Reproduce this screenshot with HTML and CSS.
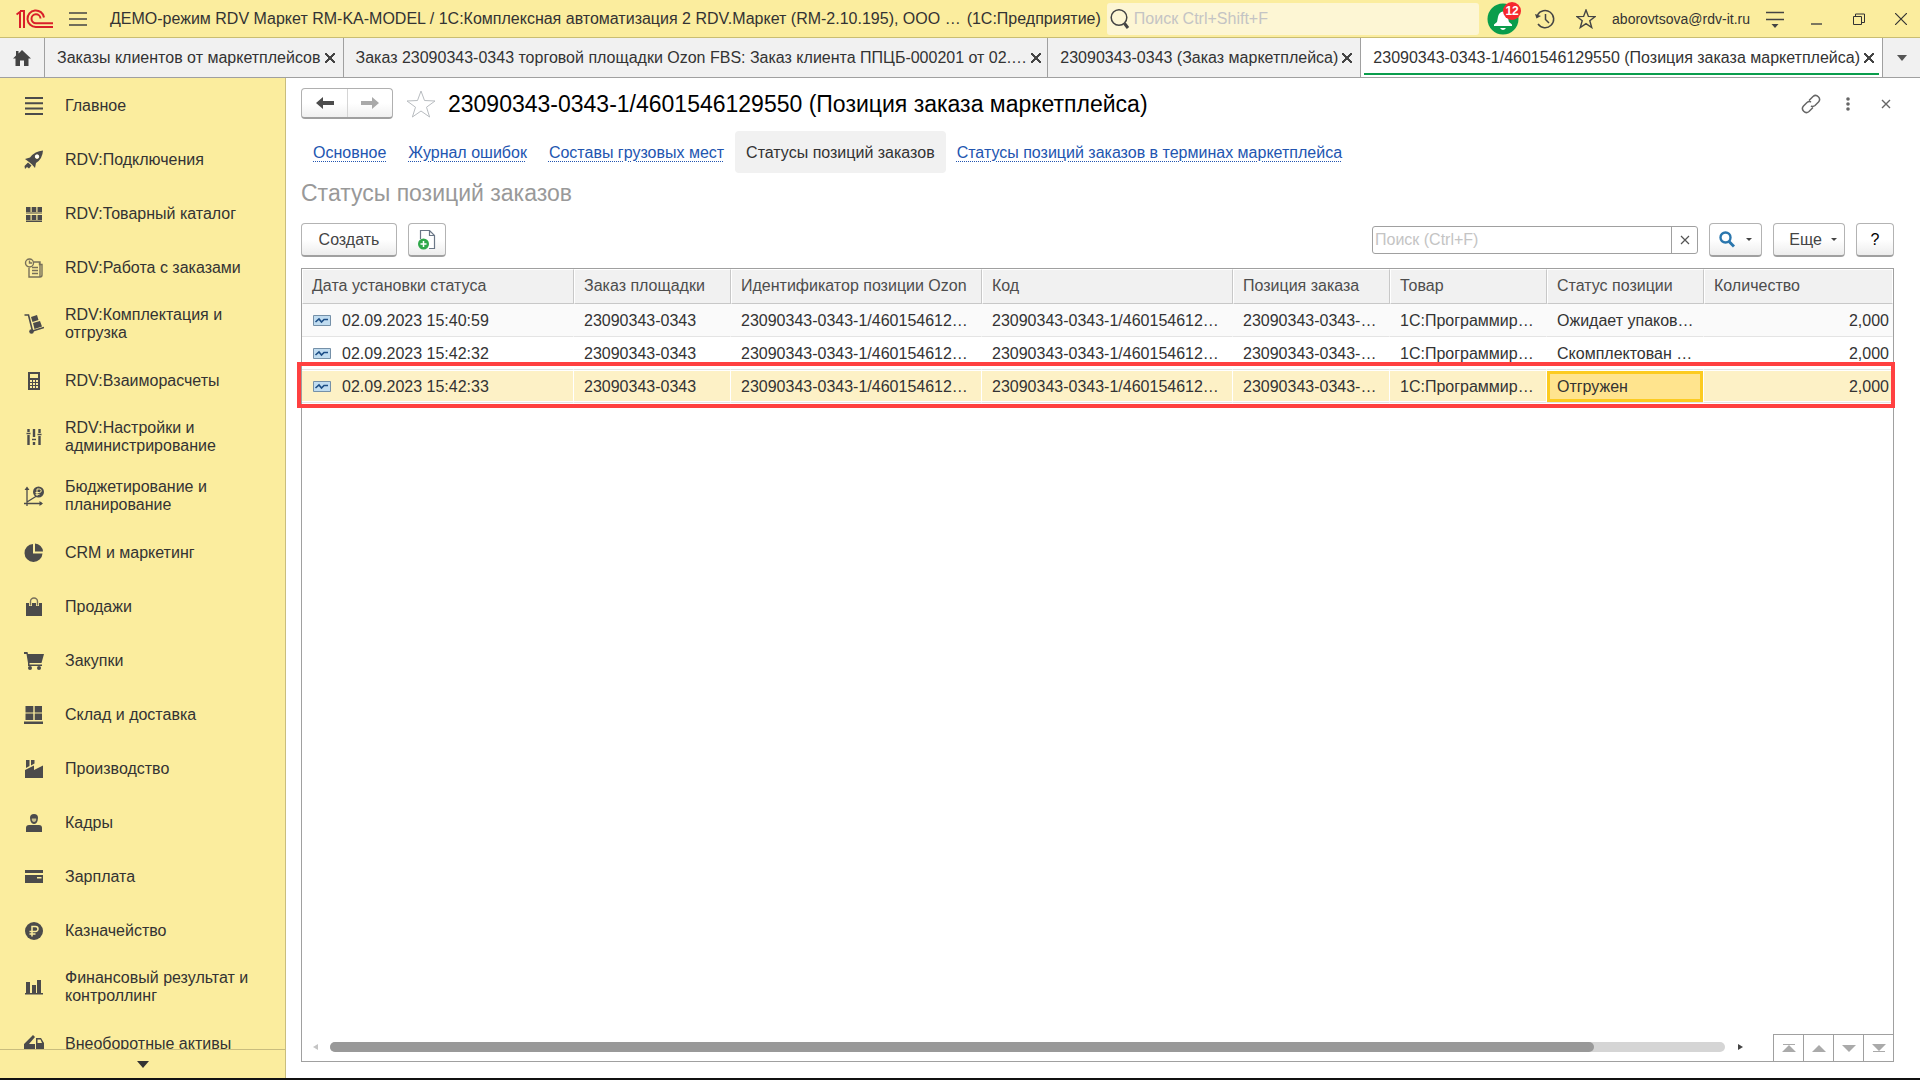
FILE: index.html
```html
<!DOCTYPE html>
<html lang="ru">
<head>
    <meta charset="UTF-8">
    <meta name="viewport" content="width=device-width, initial-scale=1.0">
    <title>Статусы позиций заказов</title>
    <link rel="stylesheet" href="styles.css">
</head>
<body>
    <header class="titlebar">
        <svg class="logo" width="38" height="20" viewBox="0 0 38 20" fill="none" stroke="#d9202a" stroke-width="2">
            <path d="M0.500 5.500L4 3V19M4 2H8V19"/>
            <path d="M28 8.500A8.300 8.300 0 1 0 20 18H37"/>
            <path d="M24.500 9.500A4.500 4.500 0 1 0 20 14.300H37"/>
        </svg>
        <button class="icon-btn menu-btn" aria-label="Меню">
            <svg width="18" height="14" viewBox="0 0 18 14" stroke="#444" stroke-width="1.400"><path d="M0 1H18M0 7H18M0 13H18"/></svg>
        </button>
        <span class="app-title">ДЕМО-режим RDV Маркет RM-KA-MODEL / 1С:Комплексная автоматизация 2 RDV.Маркет (RM-2.10.195), ООО …</span>
        <span class="app-name">(1С:Предприятие)</span>
        <label class="global-search">
            <svg width="20" height="22" viewBox="0 0 20 22" fill="none" stroke="#444"><circle cx="9" cy="9.500" r="7.800" stroke-width="1.500"/><path d="M14.500 15.500L18 20" stroke-width="3"/></svg>
            <input type="text" placeholder="Поиск Ctrl+Shift+F" aria-label="Поиск">
        </label>
        <div class="title-tools">
            <button class="icon-btn bell" aria-label="Уведомления">
                <svg width="32" height="32" viewBox="0 0 32 32"><circle cx="16" cy="16" r="15.500" fill="#0a9d4c"/><path d="M7 23V21.500L10 19C11 16 10.500 9 16 8.500C21.500 9 21 16 22 19L25 21.500V23ZM13 25H19Q16 29 13 25Z" fill="#fff"/></svg>
                <span class="badge">12</span>
            </button>
            <button class="icon-btn" aria-label="История">
                <svg width="20" height="20" viewBox="0 0 20 20" fill="none" stroke="#444" stroke-width="1.500"><path d="M2.500 6A8.600 8.600 0 1 1 3 15M10.500 5V10.500L14 14"/><path d="M0 5L6 7L1.500 9.500Z" fill="#444" stroke="none"/></svg>
            </button>
            <button class="icon-btn favorites" aria-label="Избранное">
                <svg width="20" height="20" viewBox="0 0 20 20" fill="none" stroke="#444" stroke-width="1.400"><path d="M10 1L12.400 7.400L19.200 7.600L13.800 11.800L15.700 18.500L10 14.600L4.300 18.500L6.200 11.800L0.800 7.600L7.600 7.400Z"/></svg>
            </button>
            <a class="user" href="#">aborovtsova@rdv-it.ru</a>
            <button class="icon-btn" aria-label="Сервис">
                <svg width="18" height="18" viewBox="0 0 18 18"><path d="M0 2.500H18M0 9.500H18" stroke="#444" stroke-width="1.500"/><path d="M5.500 14H12.500L9 18Z" fill="#444"/></svg>
            </button>
            <div class="window-btns">
                <button class="icon-btn" aria-label="Свернуть">
                    <svg width="12" height="12" viewBox="0 0 12 12"><path d="M0 11H11" stroke="#444" stroke-width="1.400"/></svg>
                </button>
                <button class="icon-btn" aria-label="Развернуть">
                    <svg width="12" height="12" viewBox="0 0 12 12" fill="none" stroke="#333"><path d="M0.500 3.500H8.500V11.500H0.500ZM2.500 3V1H11.500V9.500H9"/></svg>
                </button>
                <button class="icon-btn" aria-label="Закрыть окно">
                    <svg width="12" height="12" viewBox="0 0 12 12" stroke="#333" stroke-width="1.200"><path d="M0 0L12 12M12 0L0 12"/></svg>
                </button>
            </div>
        </div>
    </header>

    <nav class="tabs">
        <a class="home" href="#" aria-label="Начальная страница">
            <svg width="18" height="16" viewBox="0 0 18 16" fill="#444"><path d="M9 0L18 8.500H15.500V16H11V10.500H7V16H2.500V8.500H0L3 5.500V1H5.500V3.500Z"/></svg>
        </a>
        <div class="tab"><a href="#">Заказы клиентов от маркетплейсов</a><button class="tab-close" aria-label="Закрыть"></button></div>
        <div class="tab tab-wide"><a href="#">Заказ 23090343-0343 торговой площадки Ozon FBS: Заказ клиента ППЦБ-000201 от 02.…</a><button class="tab-close" aria-label="Закрыть"></button></div>
        <div class="tab"><a href="#">23090343-0343 (Заказ маркетплейса)</a><button class="tab-close" aria-label="Закрыть"></button></div>
        <div class="tab active"><a href="#">23090343-0343-1/4601546129550 (Позиция заказа маркетплейса)</a><button class="tab-close" aria-label="Закрыть"></button></div>
        <button class="tab-list" aria-label="Список окон"><svg width="10" height="6" viewBox="0 0 10 6" fill="#555"><path d="M0 0H10L5 6Z"/></svg></button>
    </nav>

    <div class="workspace">
        <aside class="sidebar">
            <nav class="sections">
                <a href="#"><svg viewBox="0 0 20 20" stroke="#4b4b4b" stroke-width="2"><path d="M1 2H19M1 7.300H19M1 12.600H19M1 18H19"/></svg><span>Главное</span></a>
                <a href="#"><svg viewBox="0 0 20 20"><path fill-rule="evenodd" d="M19 0.500Q18.500 9 12 13L11 18L8 14.500L5 12L1 9L6 7.500Q11 1 19 0.500ZM13 4.500A2.200 2.200 0 1 0 13.100 4.500Z"/><path d="M4 12.500L7.500 15.500L5 18.500L3 17L1 19L0.500 16Z"/><circle cx="13" cy="6.600" r="2" fill="#fff"/></svg><span>RDV:Подключения</span></a>
                <a href="#"><svg viewBox="0 0 20 20"><path d="M2 3H6.500V8H2ZM7.700 3H12.300V8H7.700ZM13.500 3H18V8H13.500ZM2 11H6.500V16H2ZM7.700 11H12.300V16H7.700ZM13.500 11H18V16H13.500ZM2 8.500H18V9.500H2ZM2 16.500H18V18H2Z"/></svg><span>RDV:Товарный каталог</span></a>
                <a href="#"><svg viewBox="0 0 20 20" fill="none" stroke="#77705a" stroke-width="1.400"><circle cx="5.500" cy="5" r="4"/><path d="M5.500 2.500V5H8M10 4H16V19H5V10M15.500 4V6.500H18V17Q18 19 16 19M8 9.500H14M8 12.500H14M8 15.500H14"/></svg><span>RDV:Работа с заказами</span></a>
                <a href="#"><svg viewBox="0 0 20 20"><path d="M0.500 1H4.500L8.500 17L20 13.500" fill="none" stroke="#4b4b4b" stroke-width="1.600"/><path d="M7 3L13 1L14.500 6L8.500 8ZM9 9L16 7L18 12.500L10.500 15Z"/><circle cx="7.500" cy="17.500" r="2.300"/></svg><span>RDV:Комплектация и отгрузка</span></a>
                <a href="#"><svg viewBox="0 0 20 20"><path fill-rule="evenodd" d="M4 1H16V19H4ZM6 3V7H14V3ZM6 9V11H8V9ZM9 9V11H11V9ZM12 9V11H14V9ZM6 12V14H8V12ZM9 12V14H11V12ZM12 12V14H14V12ZM6 15V17H8V15ZM9 15V17H11V15ZM12 15V17H14V15Z"/></svg><span>RDV:Взаиморасчеты</span></a>
                <a href="#"><svg viewBox="0 0 20 20" stroke="#4b4b4b"><path d="M4.500 2V5M4.500 8V18M10 2V10M10 15V18M15.500 2V6M15.500 9V18" stroke-width="2.400"/><path d="M2.500 6.500H6.500M8 12.500H12M13.500 7.500H17.500" stroke-width="1.600"/></svg><span>RDV:Настройки и администрирование</span></a>
                <a href="#"><svg viewBox="0 0 20 20"><path d="M3 20V2M0 17.500H18M3 16L11 11L15 8" fill="none" stroke="#4b4b4b" stroke-width="1.300"/><path d="M0.500 4L3 0.500L5.500 4ZM15.500 15L19 17.500L15.500 20Z"/><circle cx="14.500" cy="6" r="5.500"/><path d="M13 10V3H15.500A1.700 1.700 0 0 1 15.500 6.500H11.500M11.500 8.300H15.500" fill="none" stroke="#fbed9e" stroke-width="1"/></svg><span>Бюджетирование и планирование</span></a>
                <a href="#"><svg viewBox="0 0 20 20"><path d="M9 1V10.500H18.500A9 9 0 1 1 9 1ZM11 0.500A8.500 8.500 0 0 1 19 8.500H11Z"/></svg><span>CRM и маркетинг</span></a>
                <a href="#"><svg viewBox="0 0 20 20"><path d="M2 6H18V19H2Z"/><path d="M6.500 9V4.500A3.500 3.500 0 0 1 13.500 4.500V9" fill="none" stroke="#fbed9e" stroke-width="3"/><path d="M6.500 8.500V4.500A3.500 3.500 0 0 1 13.500 4.500V8.500" fill="none" stroke="#77705a" stroke-width="1.400"/></svg><span>Продажи</span></a>
                <a href="#"><svg viewBox="0 0 20 20"><path d="M0 1H3.500L4 3H20L17.500 12H5.500V13.500H18V15H4V12L2.500 3H0Z"/><circle cx="6" cy="17" r="2"/><circle cx="15" cy="17" r="2"/></svg><span>Закупки</span></a>
                <a href="#"><svg viewBox="0 0 20 20"><path d="M1.500 1H9.300V7.500H1.500ZM10.700 1H18V7.500H10.700ZM1.500 8.500H9.300V15H1.500ZM10.700 8.500H18V15H10.700ZM0 16.500H19V19H0Z"/></svg><span>Склад и доставка</span></a>
                <a href="#"><svg viewBox="0 0 20 20"><path d="M1 19V11L10 6.500V11L19 6.500V19ZM2 1H5.500V7L2 9ZM7 1H10.500V4.500L7 6.500Z"/></svg><span>Производство</span></a>
                <a href="#"><svg viewBox="0 0 20 20"><path d="M6 5Q6 1 10 1Q14 1 14 5L13.500 8Q12.500 11 10 11Q7.500 11 6.500 8Z"/><path d="M7.800 5.500H12.200V7Q11.500 9 10 9Q8.500 9 7.800 7Z" fill="#c9bf88"/><path d="M2 19V15Q2 12 5 12H15Q18 12 18 15V19Z"/></svg><span>Кадры</span></a>
                <a href="#"><svg viewBox="0 0 20 20"><path fill-rule="evenodd" d="M1 3H19V6H1ZM1 8H19V16H1ZM13 10V11.500H17.500V10Z"/></svg><span>Зарплата</span></a>
                <a href="#"><svg viewBox="0 0 20 20"><circle cx="10" cy="10" r="9"/><path d="M8 15.500V5.500H11.500A2.500 2.500 0 0 1 11.500 10.500H5.500M5.500 13H11.500" fill="none" stroke="#fbed9e" stroke-width="1.500"/></svg><span>Казначейство</span></a>
                <a href="#"><svg viewBox="0 0 20 20"><path d="M2 5H6V16H2ZM8 8H12V16H8ZM13 3H17V16H13ZM1 16H19V17.500H1Z"/></svg><span>Финансовый результат и контроллинг</span></a>
                <a href="#"><svg viewBox="0 0 20 20"><path fill-rule="evenodd" d="M0 10L9 1L11 3L5 10H11V15H0ZM12 4H17L20 9V15H12ZM13.500 5.500V9H18L16.500 5.500Z"/><circle cx="4" cy="15.500" r="2.500"/><circle cx="16" cy="15.500" r="2.500"/></svg><span>Внеоборотные активы</span></a>
            </nav>
            <button class="sections-more" aria-label="Ещё разделы"><svg width="12" height="7" viewBox="0 0 12 7" fill="#333"><path d="M0 0H12L6 7Z"/></svg></button>
        </aside>

        <main class="content">
            <div class="page-head">
                <div class="history">
                    <button aria-label="Назад"><svg width="18" height="12" viewBox="0 0 18 12" fill="#4b4b4b"><path d="M0 6L7 0V4H18V8H7V12Z"/></svg></button>
                    <button aria-label="Вперед"><svg width="18" height="12" viewBox="0 0 18 12" fill="#a9a9a9"><path d="M18 6L11 0V4H0V8H11V12Z"/></svg></button>
                </div>
                <button class="icon-btn" aria-label="В избранное">
                    <svg width="30" height="28" viewBox="0 0 30 28" fill="none" stroke="#b8bcc0"><path d="M15 1L18.500 10.500L29 11L20.500 17.200L23.600 27L15 21L6.400 27L9.500 17.200L1 11L11.500 10.500Z"/></svg>
                </button>
                <h1>23090343-0343-1/4601546129550 (Позиция заказа маркетплейса)</h1>
                <div class="head-tools">
                    <button class="icon-btn" aria-label="Ссылка">
                        <svg width="20" height="20" viewBox="0 0 20 20" fill="none" stroke="#666" stroke-width="1.500" stroke-linecap="round"><path d="M8.500 6L12 2.500A3.900 3.900 0 0 1 17.500 8L14 11.500Q12.500 12.800 10.500 12.300M11.500 14L8 17.500A3.900 3.900 0 0 1 2.500 12L6 8.500Q7.500 7.200 9.500 7.700"/></svg>
                    </button>
                    <button class="icon-btn" aria-label="Действия">
                        <svg width="4" height="14" viewBox="0 0 4 14" fill="#666"><circle cx="2" cy="2" r="1.800"/><circle cx="2" cy="7" r="1.800"/><circle cx="2" cy="12" r="1.800"/></svg>
                    </button>
                    <button class="icon-btn close-page" aria-label="Закрыть">
                        <svg width="10" height="10" viewBox="0 0 10 10" stroke="#666" stroke-width="1.400"><path d="M1 1L9 9M9 1L1 9"/></svg>
                    </button>
                </div>
            </div>

            <nav class="links">
                <a href="#">Основное</a>
                <a href="#">Журнал ошибок</a>
                <a href="#">Составы грузовых мест</a>
                <span class="current">Статусы позиций заказов</span>
                <a href="#">Статусы позиций заказов в терминах маркетплейса</a>
            </nav>

            <h2>Статусы позиций заказов</h2>

            <div class="toolbar">
                <button class="btn create">Создать</button>
                <button class="btn copy" aria-label="Создать копированием">
                    <svg width="18" height="20" viewBox="0 0 18 20"><path d="M2.500 9V0.500H11.500L16.500 5.500V18.500H11M11.500 0.500V5.500H16.500" fill="#fff" stroke="#6b7787" stroke-width="1.200"/><circle cx="5.500" cy="14" r="5.500" fill="#2fa84a"/><path d="M2.500 14H8.500M5.500 11V17" stroke="#fff" stroke-width="1.500"/></svg>
                </button>
                <div class="search">
                    <input type="text" placeholder="Поиск (Ctrl+F)" aria-label="Поиск">
                    <button aria-label="Очистить"><svg width="10" height="10" viewBox="0 0 10 10" stroke="#555" stroke-width="1.200"><path d="M1 1L9 9M9 1L1 9"/></svg></button>
                </div>
                <button class="btn find" aria-label="Найти">
                    <svg width="16" height="17" viewBox="0 0 16 17" fill="none" stroke="#2a76ad"><circle cx="6.500" cy="6.500" r="5" stroke-width="2.400"/><path d="M10 10.500L15 15.500" stroke-width="3"/></svg>
                    <svg width="6" height="3" viewBox="0 0 6 3" fill="#444"><path d="M0 0H6L3 3Z"/></svg>
                </button>
                <button class="btn more">Еще <svg width="6" height="3" viewBox="0 0 6 3" fill="#444"><path d="M0 0H6L3 3Z"/></svg></button>
                <button class="btn help">?</button>
            </div>

            <div class="list">
                <table>
                    <colgroup>
                        <col class="c-date"><col class="c-std"><col class="c-wide"><col class="c-wide"><col class="c-std"><col class="c-std"><col class="c-std"><col>
                    </colgroup>
                    <thead>
                        <tr><th>Дата установки статуса</th><th>Заказ площадки</th><th>Идентификатор позиции Ozon</th><th>Код</th><th>Позиция заказа</th><th>Товар</th><th>Статус позиции</th><th>Количество</th></tr>
                    </thead>
                    <tbody>
                        <tr>
                            <td><svg class="rec" width="18" height="11" viewBox="0 0 18 11"><path d="M0.500 0.500H17.500V10.500H0.500Z" fill="#c0dcf0" stroke="#7590a8"/><path d="M2.500 7L6 4L8.500 7L11 4.500H15" fill="none" stroke="#1c4e86" stroke-width="1.600"/></svg>02.09.2023 15:40:59</td>
                            <td>23090343-0343</td><td>23090343-0343-1/460154612…</td><td>23090343-0343-1/460154612…</td><td>23090343-0343-…</td><td>1С:Программир…</td><td>Ожидает упаков…</td><td class="num">2,000</td>
                        </tr>
                        <tr>
                            <td><svg class="rec" width="18" height="11" viewBox="0 0 18 11"><path d="M0.500 0.500H17.500V10.500H0.500Z" fill="#c0dcf0" stroke="#7590a8"/><path d="M2.500 7L6 4L8.500 7L11 4.500H15" fill="none" stroke="#1c4e86" stroke-width="1.600"/></svg>02.09.2023 15:42:32</td>
                            <td>23090343-0343</td><td>23090343-0343-1/460154612…</td><td>23090343-0343-1/460154612…</td><td>23090343-0343-…</td><td>1С:Программир…</td><td>Скомплектован …</td><td class="num">2,000</td>
                        </tr>
                        <tr class="selected">
                            <td><svg class="rec" width="18" height="11" viewBox="0 0 18 11"><path d="M0.500 0.500H17.500V10.500H0.500Z" fill="#c0dcf0" stroke="#7590a8"/><path d="M2.500 7L6 4L8.500 7L11 4.500H15" fill="none" stroke="#1c4e86" stroke-width="1.600"/></svg>02.09.2023 15:42:33</td>
                            <td>23090343-0343</td><td>23090343-0343-1/460154612…</td><td>23090343-0343-1/460154612…</td><td>23090343-0343-…</td><td>1С:Программир…</td><td class="cursor">Отгружен</td><td class="num">2,000</td>
                        </tr>
                    </tbody>
                </table>
                <div class="marker"></div>
                <div class="list-foot">
                    <svg width="5" height="6" viewBox="0 0 5 6" fill="#c4c4c4"><path d="M5 0V6L0 3Z"/></svg>
                    <div class="track"><div class="thumb"></div></div>
                    <svg width="5" height="6" viewBox="0 0 5 6" fill="#444"><path d="M0 0V6L5 3Z"/></svg>
                    <div class="pager">
                        <button aria-label="В начало"><svg width="14" height="8" viewBox="0 0 14 8"><path d="M1 0H13V1H1ZM7 1L14 8H0Z"/></svg></button>
                        <button aria-label="Вверх"><svg width="14" height="8" viewBox="0 0 14 8"><path d="M7 1L14 8H0Z"/></svg></button>
                        <button aria-label="Вниз"><svg width="14" height="8" viewBox="0 0 14 8"><path d="M0 1H14L7 8Z"/></svg></button>
                        <button aria-label="В конец"><svg width="14" height="8" viewBox="0 0 14 8"><path d="M0 0H14L7 7ZM1 7H13V8H1Z"/></svg></button>
                    </div>
                </div>
            </div>
        </main>
    </div>
    <footer class="taskbar"></footer>
</body>
</html>
```

FILE: styles.css
```css
* {
    box-sizing: border-box;
}

body {
    margin: 0;
    height: 100vh;
    display: flex;
    flex-direction: column;
    overflow: hidden;
    background: #fff;
    color: #333;
    font-family: "Liberation Sans", Arial, sans-serif;
    font-size: 16px;
    line-height: 18px;
    white-space: nowrap;
}

a {
    color: inherit;
    text-decoration: none;
}

svg {
    display: block;
    flex: none;
}

button {
    padding: 0;
    border: none;
    background: none;
    color: inherit;
    font: inherit;
    display: flex;
    align-items: center;
    justify-content: center;
    cursor: pointer;
}

input {
    border: none;
    outline: none;
    padding: 0;
    background: transparent;
    font: inherit;
    min-width: 0;
}

input::placeholder {
    color: #c4c4c4;
}

/* Заголовок окна */
.titlebar {
    height: 38px;
    flex: none;
    display: flex;
    align-items: center;
    padding: 0 13px 0 16px;
    background: #fbed9e;
    border-bottom: 1px solid #c9bd72;
}

.menu-btn {
    margin: 0 23px 0 15px;
}

.app-name {
    margin: 0 6px;
}

.global-search {
    flex: 1;
    height: 32px;
    display: flex;
    align-items: center;
    gap: 4px;
    padding-left: 3px;
    background: #fdf6d4;
    border-radius: 3px;
}

.global-search input {
    flex: 1;
}

.title-tools {
    display: flex;
    align-items: center;
    gap: 16px;
    margin-left: 8px;
}

.bell {
    position: relative;
}

.badge {
    position: absolute;
    top: -1px;
    right: -2px;
    width: 18px;
    height: 18px;
    border-radius: 50%;
    background: #f6282d;
    color: #fff;
    font-size: 12px;
    font-weight: bold;
}

.favorites {
    margin-left: 5px;
}

.user {
    font-size: 14px;
}

.window-btns {
    display: flex;
    gap: 30px;
    margin-left: 11px;
}

/* Вкладки */
.tabs {
    height: 40px;
    flex: none;
    display: flex;
    background: #f1f1f1;
    border-bottom: 1px solid #a0a0a0;
}

.home,
.tab,
.tab-list {
    flex: none;
    display: flex;
    align-items: center;
    justify-content: center;
    border-right: 1px solid #a0a0a0;
}

.home {
    width: 45px;
}

.tab {
    gap: 4px;
    padding: 0 8px 0 12px;
}

.tab-wide {
    flex: 1;
    min-width: 0;
    justify-content: space-between;
}

.tab-close {
    width: 10px;
    height: 10px;
    flex: none;
    background: linear-gradient(45deg, transparent 44%, #444 44%, #444 56%, transparent 56%), linear-gradient(-45deg, transparent 44%, #444 44%, #444 56%, transparent 56%);
}

.tab.active {
    background: linear-gradient(#0a9d4c, #0a9d4c) center bottom 2px / calc(100% - 6px) 2px no-repeat #fff;
}

.tab-list {
    width: 37px;
    border-right: none;
}

.workspace {
    flex: 1;
    min-height: 0;
    display: flex;
}

/* Панель разделов */
.sidebar {
    width: 286px;
    flex: none;
    display: flex;
    flex-direction: column;
    background: #fbed9e;
    border-right: 1px solid #c9bd7e;
}

.sections {
    flex: 1;
    min-height: 0;
    overflow: hidden;
    white-space: normal;
}

.sections a {
    min-height: 54px;
    display: flex;
    align-items: center;
    gap: 21px;
    padding: 12px 30px 11px 24px;
}

.sections svg {
    width: 20px;
    height: 20px;
    fill: #4b4b4b;
}

.sections svg[fill="none"] {
    fill: none;
}

.sections-more {
    height: 29px;
    flex: none;
    border-top: 1px solid #c9bd7e;
}

/* Рабочая область */
.content {
    flex: 1;
    min-width: 0;
    display: flex;
    flex-direction: column;
    padding: 10px 26px 16px 15px;
}

.page-head {
    height: 31px;
    display: flex;
    align-items: center;
    gap: 12px;
}

.history {
    display: flex;
    height: 31px;
    margin-right: 1px;
    border: 1px solid #b0b0b0;
    border-bottom: 2px solid #a0a0a0;
    border-radius: 4px;
    background: linear-gradient(#fff 50%, #f0f0f0);
}

.history button {
    width: 45px;
}

.history button + button {
    border-left: 1px solid #d5d5d5;
}

h1,
h2 {
    margin: 0;
    font-size: 23px;
    line-height: 30px;
    font-weight: normal;
}

h1 {
    color: #000;
}

.head-tools {
    display: flex;
    align-items: center;
    gap: 25px;
    margin-left: auto;
    margin-right: 3px;
}

.close-page {
    margin-left: 6px;
}

.links {
    display: flex;
    margin: 12px 0 0 1px;
}

.links a,
.links .current {
    height: 42px;
    padding: 13px 11px 0;
}

.links a {
    color: #2255b0;
    text-decoration: underline dotted 1px;
    text-underline-offset: 3px;
}

.links .current {
    background: #f1f1f1;
    border-radius: 4px;
}

h2 {
    margin-top: 5px;
    color: #999;
}

.toolbar {
    display: flex;
    align-items: center;
    margin-top: 15px;
}

.btn {
    height: 34px;
    border: 1px solid #b3b3b3;
    border-bottom: 2px solid #a0a0a0;
    border-radius: 4px;
    background: linear-gradient(#fff 50%, #ededed);
    color: #444;
}

.create {
    width: 96px;
    margin-right: 11px;
}

.copy {
    width: 38px;
}

.search {
    width: 326px;
    height: 28px;
    display: flex;
    margin-left: auto;
    border: 1px solid #a0a0a0;
    border-radius: 3px;
}

.search input {
    flex: 1;
    padding-left: 2px;
}

.search button {
    width: 26px;
    border-left: 1px solid #a0a0a0;
}

.find,
.more,
.help {
    margin-left: 11px;
}

.find {
    width: 53px;
    gap: 11px;
}

.more {
    width: 72px;
    gap: 9px;
    padding-left: 8px;
}

.help {
    width: 38px;
    color: #000;
}

/* Список */
.list {
    position: relative;
    flex: 1;
    min-height: 0;
    display: flex;
    flex-direction: column;
    margin-top: 11px;
    border: 1px solid #a0a0a0;
}

table {
    width: 100%;
    table-layout: fixed;
    border-collapse: separate;
    border-spacing: 0;
}

.c-date {
    width: 272px;
}

.c-std {
    width: 157px;
}

.c-wide {
    width: 251px;
}

th,
td {
    height: 33px;
    padding: 0 3px 0 10px;
    overflow: hidden;
    text-align: left;
    font-weight: normal;
}

th {
    height: 35px;
    background: #f1f1f1;
    border: 1px solid #fff;
    border-right-color: #c8c8c8;
    border-bottom-color: #c8c8c8;
    padding: 0 3px 2px 9px;
    color: #4d4d4d;
}

th:last-child {
    border-right-color: #fff;
}

td {
    border: solid transparent;
    border-width: 1px 1px 1px 0;
    border-bottom-color: #e4e4e4;
}

tbody tr:first-child td {
    background: #fafafa;
}

.selected td {
    background: #fdf1c6;
    border-top-color: #fff;
    border-right-color: #fff;
    box-shadow: inset 0 -1px #fff;
}

.selected .cursor {
    background: #ffe48e;
    box-shadow: inset 0 0 0 3px #fccb20;
}

.rec {
    display: inline-block;
    margin: 0 11px 0 1px;
}

td.num {
    text-align: right;
}

/* Рамка вокруг последней строки */
.marker {
    position: absolute;
    top: 93px;
    left: -5px;
    right: -2px;
    height: 46px;
    border: 4px solid #ff4040;
}

.list-foot {
    display: flex;
    align-items: flex-end;
    margin-top: auto;
    padding-left: 11px;
}

.list-foot > svg {
    margin-bottom: 11px;
}

.track {
    flex: 1;
    height: 10px;
    margin: 0 13px 9px 12px;
    border-radius: 5px;
    background: #d5d5d5;
}

.thumb {
    width: 90.6%;
    height: 10px;
    border-radius: 5px;
    background: #999;
}

.pager {
    display: flex;
    margin-left: 30px;
    border-top: 1px solid #a0a0a0;
}

.pager button {
    width: 30px;
    height: 26px;
    border-left: 1px solid #a0a0a0;
}

.pager svg {
    fill: #aaa;
}

.taskbar {
    height: 2px;
    flex: none;
    background: #111;
}
```
